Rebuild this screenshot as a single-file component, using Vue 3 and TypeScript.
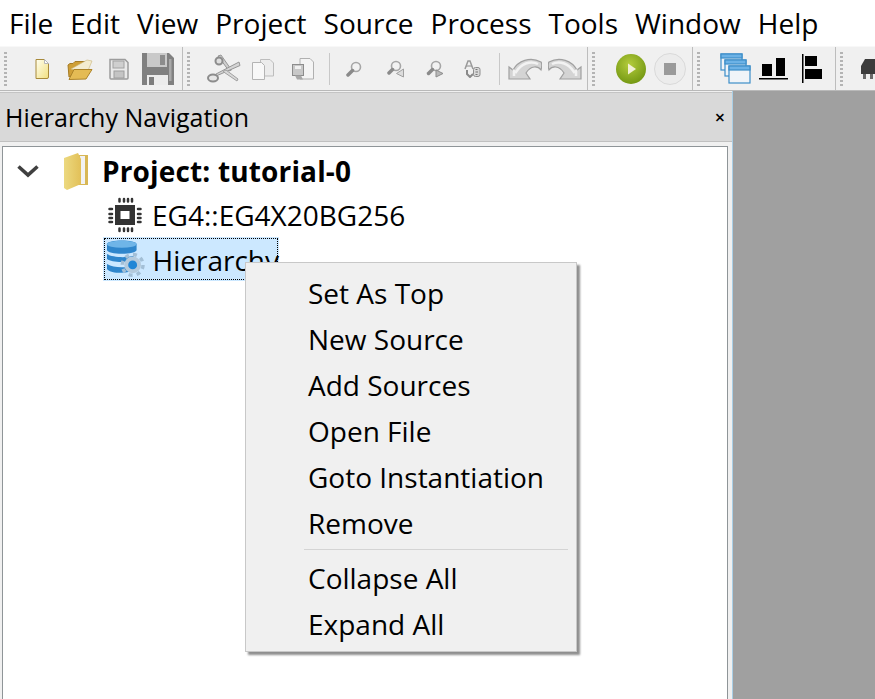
<script setup lang="ts">
const menus: string[] = ["File", "Edit", "View", "Project", "Source", "Process", "Tools", "Window", "Help"];
const contextTop: string[] = ["Set As Top", "New Source", "Add Sources", "Open File", "Goto Instantiation", "Remove"];
const contextBottom: string[] = ["Collapse All", "Expand All"];
</script>

<template>
  <div class="app">
    <div class="menubar">
      <span v-for="m in menus" :key="m" class="menu-item">{{ m }}</span>
    </div>

    <div class="toolbar">
      <i class="grip first"></i>
      <div class="slot s1">
        <svg width="17" height="22" viewBox="0 0 17 22">
          <defs>
            <linearGradient id="docFill" x1="0" y1="0" x2="1" y2="1">
              <stop offset="0" stop-color="#fffff0" />
              <stop offset="1" stop-color="#f2df7e" />
            </linearGradient>
          </defs>
          <path d="M2 1.500h8.500l4 4V19a1.500 1.500 0 0 1-1.500 1.500H2z" fill="url(#docFill)" stroke="#a88a3a" />
          <path d="M10.500 1.500v4h4z" fill="#fff" stroke="#b8b8b8" />
        </svg>
      </div>
      <div class="slot s2">
        <svg width="26" height="26" viewBox="0 0 26 26">
          <path d="M2 21 1 9l2-1.500h3l2-2h10l1 3z" fill="#cf9f36" stroke="#a67c26" />
          <path d="M4 13 20 4l5 1-5 12z" fill="#f4ecd0" stroke="#c9b57a" stroke-width=".6" />
          <path d="M2 23.500 7 13.500h18l-6 9.500z" fill="#e4bb54" stroke="#ad8429" />
        </svg>
      </div>
      <div class="slot s2">
        <svg width="22" height="24" viewBox="0 0 22 24">
          <path d="M2 2.500h15l3 3V21a1 1 0 0 1-1 1H3a1 1 0 0 1-1-1z" fill="#e9e9e9" stroke="#9c9c9c" stroke-width="1.500" />
          <rect x="5" y="4" width="11" height="7" fill="#cfcfcf" stroke="#a2a2a2" />
          <rect x="6" y="14" width="10" height="7" fill="#c4c4c4" stroke="#9e9e9e" />
        </svg>
      </div>
      <div class="slot s2">
        <svg width="32" height="32" viewBox="0 0 32 32">
          <path d="M0 0h27l5 5v27H0z" fill="#808080" />
          <rect x="5" y="0" width="20" height="14" fill="#c9c9c9" />
          <rect x="18" y="2" width="5" height="10" fill="#8c8c8c" />
          <rect x="27" y="6" width="2.500" height="22" fill="#a8a8a8" />
          <rect x="5" y="22" width="21" height="10" fill="#ececec" />
          <rect x="7" y="24" width="5" height="8" fill="#7d7d7d" />
        </svg>
      </div>
      <i class="sep dark after-save"></i>
      <i class="grip"></i>
      <div class="slot scissors">
        <svg width="34" height="30" viewBox="0 0 34 30">
          <path d="M11 2 22 17l2.500-1L14 1z" fill="#cfcfcf" stroke="#969696" />
          <circle cx="12" cy="7" r="3.500" fill="#dedede" stroke="#8c8c8c" stroke-width="2" />
          <path d="M32 8 9 20l-1 2.500 25-11z" fill="#d4d4d4" stroke="#969696" />
          <path d="M31 25 19 16l-3 1.500L30 27z" fill="#d8d8d8" stroke="#a0a0a0" />
          <ellipse cx="6" cy="24" rx="5" ry="3.500" fill="#e6e6e6" stroke="#8c8c8c" stroke-width="2" />
        </svg>
      </div>
      <div class="slot s3">
        <svg width="24" height="24" viewBox="0 0 24 24">
          <path d="M9.500 2.500H19l3.500 3.500v13H9.500z" fill="#ececec" stroke="#bdbdbd" />
          <path d="M1.500 5.500h9l3 3v14h-12z" fill="#f8f8f8" stroke="#b4b4b4" />
        </svg>
      </div>
      <div class="slot s4">
        <svg width="24" height="26" viewBox="0 0 24 26">
          <path d="M9 2.500h10l3.500 3.500v17H9z" fill="#f4f4f4" stroke="#b0b0b0" />
          <rect x="1.500" y="8.500" width="11" height="11" fill="#c8c8c8" stroke="#8c8c8c" />
          <rect x="4" y="10" width="6" height="3" fill="#f0f0f0" />
          <path d="M4 19.500h6l2 4H6z" fill="#a8a8a8" />
        </svg>
      </div>
      <i class="sep"></i>
      <div class="slot s5">
        <svg width="16" height="16" viewBox="0 0 16 16">
          <circle cx="10" cy="6" r="4.500" fill="#f2f2f2" stroke="#a6a6a6" stroke-width="1.600" />
          <path d="M6.500 9.500 2 14" stroke="#8a8a8a" stroke-width="3.500" stroke-linecap="round" />
        </svg>
      </div>
      <div class="slot s6">
        <svg width="18" height="18" viewBox="0 0 18 18">
          <circle cx="9" cy="6" r="4.500" fill="#f2f2f2" stroke="#a6a6a6" stroke-width="1.600" />
          <path d="M5.500 9.500 2 13" stroke="#8a8a8a" stroke-width="3.500" stroke-linecap="round" />
          <path d="M16.500 9v8L9.500 13.500z" fill="#dcdcdc" stroke="#a0a0a0" />
        </svg>
      </div>
      <div class="slot s7">
        <svg width="18" height="18" viewBox="0 0 18 18">
          <circle cx="10" cy="6" r="4.500" fill="#f2f2f2" stroke="#a6a6a6" stroke-width="1.600" />
          <path d="M6.500 9.500 2.500 13.500" stroke="#8a8a8a" stroke-width="3.500" stroke-linecap="round" />
          <path d="M10 10v7l7-3.500z" fill="#b8b8b8" stroke="#8c8c8c" />
        </svg>
      </div>
      <div class="slot s8">
        <svg width="18" height="18" viewBox="0 0 18 18">
          <path d="M2 9 5 1h2l3 8" fill="none" stroke="#9a9a9a" stroke-width="1.500" />
          <path d="M3 6h6" stroke="#9a9a9a" stroke-width="1.200" />
          <path d="M4 10v4l3 3 3-3" fill="none" stroke="#8a8a8a" stroke-width="2" />
          <rect x="10.500" y="7.500" width="6.500" height="9" rx="2" fill="#d8d8d8" stroke="#8e8e8e" />
          <path d="M12.500 9.500h2M12.500 12h2.500M12.500 14.500h2" stroke="#777" />
        </svg>
      </div>
      <i class="sep after-find"></i>
      <div class="slot s9">
        <svg width="34" height="24" viewBox="0 0 34 24">
          <path d="M1 22V10l4 3C10 4 22-1 33 5c1 1 1 5 0 8-3-4-10-5-15 3l4 6z" fill="#d4d4d4" stroke="#a0a0a0" stroke-width="1.200" />
          <path d="M6 19V14l2 1C13 7 22 3 30 7" fill="none" stroke="#f2f2f2" stroke-width="2.500" />
        </svg>
      </div>
      <div class="slot s10">
        <svg width="34" height="24" viewBox="0 0 34 24">
          <path d="M33 22V10l-4 3C24 4 12-1 1 5c-1 1-1 5 0 8 3-4 10-5 15 3l-4 6z" fill="#d4d4d4" stroke="#a0a0a0" stroke-width="1.200" />
          <path d="M28 19V14l-2 1C21 7 12 3 4 7" fill="none" stroke="#f2f2f2" stroke-width="2.500" />
        </svg>
      </div>
      <i class="sep dark after-redo"></i>
      <i class="grip"></i>
      <div class="slot s11">
        <svg width="30" height="30" viewBox="0 0 30 30">
          <defs>
            <radialGradient id="runFill" cx=".45" cy=".35" r=".7">
              <stop offset="0" stop-color="#b4cc3c" />
              <stop offset="1" stop-color="#6f9410" />
            </radialGradient>
          </defs>
          <circle cx="15" cy="15" r="15" fill="url(#runFill)" />
          <path d="M12 9.500v11l8-5.500z" fill="#f2f0d6" />
        </svg>
      </div>
      <div class="slot s12">
        <svg width="32" height="32" viewBox="0 0 32 32">
          <circle cx="16" cy="16" r="15.500" fill="#ececec" stroke="#d9d9d9" />
          <rect x="10" y="10" width="12" height="12" fill="#9a9a9a" />
        </svg>
      </div>
      <i class="sep dark after-stop"></i>
      <i class="grip"></i>
      <div class="slot s13">
        <svg width="31" height="31" viewBox="0 0 31 31">
          <g stroke="#3c8ec9" stroke-width="1.200">
            <rect x="1" y="1" width="21" height="16" fill="#eef3f8" />
            <rect x="1" y="1" width="21" height="4" fill="#6cb2e6" />
            <rect x="5" y="7" width="21" height="16" fill="#eef3f8" />
            <rect x="5" y="7" width="21" height="4" fill="#6cb2e6" />
            <rect x="9" y="13" width="21" height="17" fill="#f0f4f8" />
            <rect x="9" y="13" width="21" height="4" fill="#6cb2e6" />
          </g>
        </svg>
      </div>
      <div class="slot s14">
        <svg width="29" height="24" viewBox="0 0 29 24">
          <rect x="3" y="7" width="10" height="12" />
          <rect x="17" y="1" width="9" height="18" />
          <rect x="0" y="21" width="29" height="1.500" />
        </svg>
      </div>
      <div class="slot s15">
        <svg width="20" height="29" viewBox="0 0 20 29">
          <rect x="0" y="0" width="1.500" height="29" />
          <rect x="3" y="2" width="12" height="10" />
          <rect x="3" y="15" width="17" height="10" />
        </svg>
      </div>
      <i class="sep dark after-align"></i>
      <i class="grip"></i>
      <div class="slot s16">
        <svg width="24" height="24" viewBox="0 0 24 24">
          <path d="M5 2h19v15H1v-8z" fill="#3c3c3c" />
          <path d="M3 17h3v5H3zM10 17h3v5h-3zM17 17h3v5h-3z" fill="#6a6a6a" />
        </svg>
      </div>
    </div>

    <div class="workspace">
      <div class="panel">
        <div class="panel-title">
          <span>Hierarchy Navigation</span>
          <span class="close">×</span>
        </div>
        <div class="tree">
          <div class="node root">
            <svg class="chevron" width="24" height="14" viewBox="0 0 24 14">
              <path d="M2.500 2.500 12 11l9.500-8.500" fill="none" stroke="#404040" stroke-width="3.600" />
            </svg>
            <svg class="folder" width="26" height="38" viewBox="0 0 26 38">
              <defs>
                <linearGradient id="folderFill" x1="0" y1="0" x2="1" y2="0">
                  <stop offset="0" stop-color="#ecd980" />
                  <stop offset="1" stop-color="#e2c058" />
                </linearGradient>
              </defs>
              <path d="M14 3h11v30H14z" fill="#d8b755" />
              <path d="M17 4h5v28h-5z" fill="#f2f2f2" />
              <path d="M1 6 15 1l3 6v25l-14 6-3-2z" fill="url(#folderFill)" />
            </svg>
            <span class="root-label">Project: tutorial-0</span>
          </div>
          <div class="node child device">
            <svg width="38" height="38" viewBox="0 0 38 38">
              <rect x="9" y="9" width="20" height="20" fill="#333" />
              <rect x="14.500" y="15" width="9" height="8" fill="#fff" />
              <g stroke="#333" stroke-width="2.500" stroke-linecap="round">
                <path d="M13.500 3v2.500M18 3v2.500M22 3v2.500M26 3v2.500" />
                <path d="M13.500 32.500V35M18 32.500V35M22 32.500V35M26 32.500V35" />
                <path d="M3.500 13H6M3.500 18H6M3.500 22H6M3.500 26H6" />
                <path d="M32 13h2.500M32 18h2.500M32 22h2.500M32 26h2.500" />
              </g>
            </svg>
            <span>EG4::EG4X20BG256</span>
          </div>
          <div class="node child selected">
            <svg width="40" height="38" viewBox="0 0 40 38">
              <path d="M2 4c0-5 30-5 30 0v6c0 5-30 5-30 0z" fill="#2f86cc" />
              <ellipse cx="17" cy="4" rx="15" ry="3.500" fill="#6fb5e8" />
              <path d="M2 14c6 4 24 4 28 1l-4 6c-8 2-20 1-24-2z" fill="#2f86cc" />
              <path d="M2 24c5 3 13 4 20 3l3 5c-8 2-20 1-23-3z" fill="#2f86cc" />
              <circle cx="28" cy="25" r="10.500" fill="none" stroke="#a3bfd6" stroke-width="3.500" stroke-dasharray="4 4.250" />
              <circle cx="28" cy="25" r="8.500" fill="#b4cadc" />
              <circle cx="28" cy="25" r="4.500" fill="#1f86d6" />
            </svg>
            <span class="selected-label">Hierarchy</span>
          </div>
        </div>
      </div>
      <div class="canvas"></div>
    </div>

    <div class="context">
      <div v-for="c in contextTop" :key="c" class="context-item">{{ c }}</div>
      <div class="context-sep"></div>
      <div v-for="c in contextBottom" :key="c" class="context-item">{{ c }}</div>
    </div>
  </div>
</template>

<style>
html,
body {
  margin: 0;
  background: #fff;
  overflow: hidden;
}
</style>

<style scoped>
.app {
  position: relative;
  width: 875px;
  height: 699px;
  overflow: hidden;
  display: flex;
  flex-direction: column;
  font-family: "Open Sans", "Noto Sans", sans-serif;
  color: #000;
}

.menubar {
  height: 46px;
  flex: none;
  display: flex;
  align-items: center;
  padding-left: 9px;
  gap: 17px;
  background: #fff;
  font-size: 28px;
}

.toolbar {
  height: 43px;
  flex: none;
  display: flex;
  align-items: center;
  background: #f0f0f0;
  border-top: 1px solid #f8f8f8;
  border-bottom: 1px solid #b9b9b9;
  box-sizing: content-box;
  overflow: hidden;
}

.slot {
  flex: none;
  display: flex;
  align-items: center;
  justify-content: center;
  height: 43px;
}

.slot svg {
  display: block;
}

.grip {
  flex: none;
  width: 3px;
  height: 34px;
  margin-left: 4px;
  background: repeating-linear-gradient(to bottom, #b4b4b4 0 2px, #f0f0f0 2px 4px);
}

.sep {
  flex: none;
  width: 1px;
  height: 32px;
  background: #c8c8c8;
}

.sep.dark {
  height: 43px;
  background: #bdbdbd;
}

.s1 { width: 20px; margin-left: 25px; }
.s2 { width: 39px; }
.s1 + .s2 { margin-left: 8px; }
.s3 { width: 38px; margin-left: 2px; }
.s4 { width: 40px; margin-left: 1px; }
.s5 { width: 24px; margin-left: 12px; }
.s6 { width: 20px; margin-left: 20px; }
.s7 { width: 20px; margin-left: 19px; }
.s8 { width: 20px; margin-left: 17px; }
.s9 { width: 38px; margin-left: 6px; }
.s10 { width: 38px; margin-left: 2px; }
.s11 { width: 32px; margin-left: 20px; }
.s12 { width: 34px; margin-left: 6px; }
.s13 { width: 33px; margin-left: 19px; }
.s14 { width: 30px; margin-left: 6px; }
.s15 { width: 22px; margin-left: 13px; }
.s16 { width: 24px; margin-left: 17px; }

.scissors {
  width: 36px;
  margin-left: 16px;
}

.after-save { margin-left: 5px; }
.s4 + .sep { margin-left: 6px; }
.after-find { margin-left: 17px; }
.after-redo { margin-left: 3px; }
.after-stop { margin-left: 5px; }
.after-align { margin-left: 12px; }

.workspace {
  flex: 1;
  display: flex;
  min-height: 0;
}

.panel {
  width: 733px;
  flex: none;
  display: flex;
  flex-direction: column;
  box-sizing: border-box;
  border-right: 1px solid #a9cfe6;
  background: #f0f0f0;
}

.panel-title {
  height: 50px;
  flex: none;
  display: flex;
  align-items: center;
  justify-content: space-between;
  box-sizing: border-box;
  margin-top: 1px;
  padding: 0 7px 0 5px;
  background: #d9d9d9;
  border-top: 1px solid #c4c4c4;
  border-bottom: 1px solid #c0c0c0;
  font-size: 25px;
}

.close {
  font-size: 18px;
  line-height: 1;
  font-weight: 600;
}

.tree {
  flex: 1;
  margin: 4px 4px 0 2px;
  padding-top: 2px;
  box-sizing: border-box;
  background: #fff;
  border: 1px solid #8f9598;
  border-bottom: none;
  font-size: 28px;
}

.node {
  display: flex;
  align-items: center;
}

.root {
  height: 44px;
}

.chevron {
  margin-left: 13px;
}

.folder {
  margin-left: 23px;
}

.root-label {
  margin-left: 13px;
  font-weight: 700;
  letter-spacing: 0.15px;
}

.child {
  height: 43px;
  margin-left: 100px;
}

.device {
  padding-left: 3px;
  gap: 8px;
}

.selected {
  width: 176px;
  height: 44px;
  box-sizing: border-box;
  margin-top: 1px;
  padding-left: 2px;
  gap: 8px;
  background: #cce8ff;
  outline: 1px dotted #000;
  outline-offset: -2px;
}

.selected-label {
  padding-top: 2px;
}

.canvas {
  flex: 1;
  background: #a0a0a0;
}

.context {
  position: absolute;
  left: 245px;
  top: 262px;
  width: 332px;
  height: 390px;
  box-sizing: border-box;
  padding-top: 8px;
  background: #f0f0f0;
  border: 1px solid #c8c8c8;
  box-shadow: 3px 3px 2px #8f8f8f;
  font-size: 28px;
}

.context-item {
  height: 46px;
  line-height: 45px;
  padding-left: 62px;
}

.context-sep {
  height: 1px;
  margin: 2px 8px 6px 58px;
  background: #d4d4d4;
}
</style>
